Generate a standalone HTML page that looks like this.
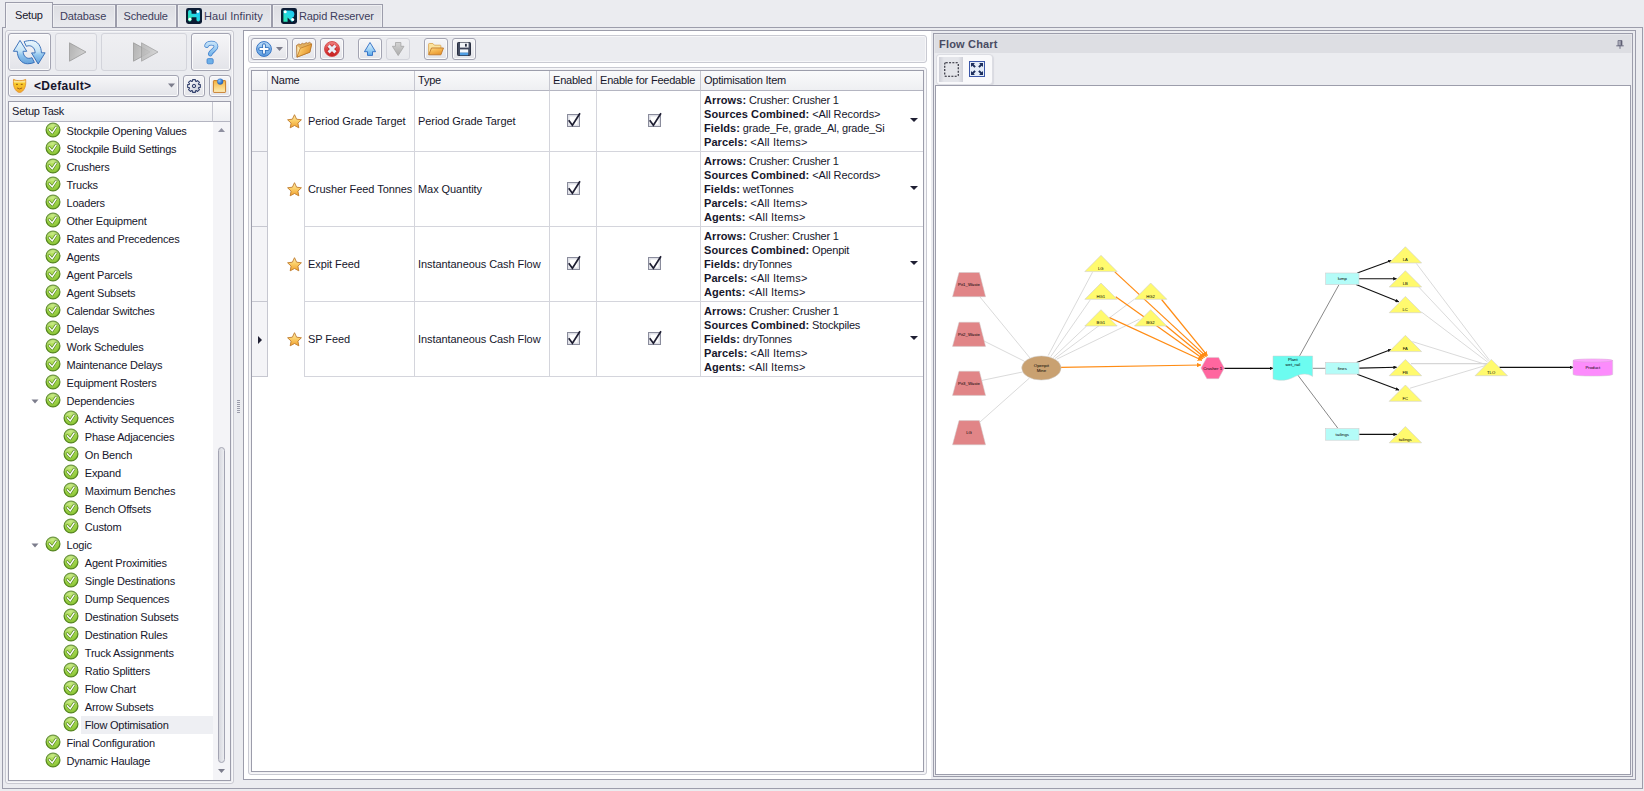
<!DOCTYPE html>
<html lang="en">
<head>
<meta charset="utf-8">
<title>Flow Optimisation</title>
<style>
*{box-sizing:border-box;margin:0;padding:0}
html,body{width:1644px;height:791px;overflow:hidden}
body{background:#ebecf0;font-family:"Liberation Sans",sans-serif;font-size:11px;letter-spacing:-0.21px;color:#16162b;position:relative}
.a{position:absolute}
.t{position:absolute;white-space:nowrap;line-height:14px;height:14px}
/* tabs */
.tab{position:absolute;top:4px;height:23px;border:1px solid #9c9dab;border-bottom:none;background:linear-gradient(#dcdde2,#e9eaee);box-shadow:inset 1px 1px 0 #eeeff2,inset -1px 0 0 #eeeff2;color:#3c3d5c}
.tab.act{top:2px;height:26px;background:#ebecf0;color:#16162b;z-index:3;box-shadow:inset 1px 1px 0 #f4f4f6}
.tab span{position:absolute;top:4px;white-space:nowrap;line-height:14px}
.tab.act span{top:5px}
.page{position:absolute;left:2px;top:27px;width:1641px;height:762px;border:1px solid #9c9dab;border-top-color:#9c9dab}
/* generic panels */
.grp{position:absolute;border:1px solid #c9cad2;border-radius:3px;box-shadow:inset 0 0 0 1px #f7f7f9}
.btn{position:absolute;border:1px solid #a3a4b2;border-radius:3px;background:linear-gradient(#f6f6f8,#e3e4e9);box-shadow:inset 0 0 0 1px #fbfbfc}
.btn.dis{border-color:#d3d4db;background:linear-gradient(#efeff2,#e8e9ed);box-shadow:none}
.sunk{position:absolute;border:1px solid #9c9dab;background:#fff}
/* tree */
.row{position:absolute;left:0;height:18px;width:204px}
.row .tx{position:absolute;top:2px;line-height:14px;white-space:nowrap}
.ck{position:absolute;top:0;width:16px;height:16px}
/* grid */
.hd{position:absolute;top:0;height:20px;border-right:1px solid #c6c7d0;border-bottom:1px solid #b4b5c1;background:linear-gradient(#fafafb,#eeeff2)}
.hd span{position:absolute;left:3px;top:2px;line-height:14px;white-space:nowrap}
.vl{position:absolute;width:1px;background:#d4d5dc}
.hl{position:absolute;height:1px;background:#d4d5dc}
.ol{position:absolute;left:452px;white-space:nowrap;line-height:14px;height:14px}
.ol b{font-weight:bold;letter-spacing:0.08px}
.t b{font-weight:bold;letter-spacing:0.08px}
.w{letter-spacing:0.2px}
.w2{letter-spacing:-0.06px}
.c{letter-spacing:-0.07px}
.cb{position:absolute;width:13px;height:13px}
svg{position:absolute;overflow:visible}
svg text{font-family:"Liberation Sans",sans-serif}
</style>
</head>
<body>
<svg width="0" height="0" style="left:0;top:0">
<defs>
<radialGradient id="gok" cx="0.45" cy="0.25" r="0.85"><stop offset="0" stop-color="#bce668"/><stop offset="0.7" stop-color="#94cc3e"/><stop offset="1" stop-color="#7ab42e"/></radialGradient>
<linearGradient id="gstar" x1="0" y1="0" x2="0" y2="1"><stop offset="0" stop-color="#fff0b8"/><stop offset="0.45" stop-color="#fbcf68"/><stop offset="1" stop-color="#f0a030"/></linearGradient>
<linearGradient id="gblue" x1="0" y1="0" x2="0" y2="1"><stop offset="0" stop-color="#d2e8fa"/><stop offset="1" stop-color="#5a9fe0"/></linearGradient>
<linearGradient id="gfold" x1="0" y1="0" x2="0.600" y2="1"><stop offset="0" stop-color="#fde4a4"/><stop offset="0.400" stop-color="#f7bd5a"/><stop offset="1" stop-color="#e8962e"/></linearGradient>
<linearGradient id="gred" x1="0" y1="0" x2="0" y2="1"><stop offset="0" stop-color="#f08484"/><stop offset="0.500" stop-color="#dc4444"/><stop offset="1" stop-color="#c41c1c"/></linearGradient>
<linearGradient id="gadd" x1="0" y1="0" x2="0" y2="1"><stop offset="0" stop-color="#c2e0fa"/><stop offset="0.500" stop-color="#86baec"/><stop offset="1" stop-color="#5a9ae0"/></linearGradient>
<linearGradient id="ggrey" x1="0" y1="0" x2="1" y2="0.3"><stop offset="0" stop-color="#b2b2b2"/><stop offset="1" stop-color="#d0d0d0"/></linearGradient>
<linearGradient id="gteal" x1="0" y1="1" x2="1" y2="0" gradientUnits="objectBoundingBox"><stop offset="0" stop-color="#2ee8a6"/><stop offset="0.55" stop-color="#24d6e6"/><stop offset="1" stop-color="#1cc4f4"/></linearGradient>
<linearGradient id="grf" x1="0" y1="0" x2="0" y2="25" gradientUnits="userSpaceOnUse"><stop offset="0" stop-color="#eef9fe"/><stop offset="0.45" stop-color="#c4e3f6"/><stop offset="0.6" stop-color="#92c6ee"/><stop offset="1" stop-color="#5c9bd8"/></linearGradient>
<linearGradient id="ghq" x1="0" y1="0" x2="0" y2="14" gradientUnits="userSpaceOnUse"><stop offset="0" stop-color="#cfe8fa"/><stop offset="1" stop-color="#74b4ea"/></linearGradient>
<linearGradient id="gmask" x1="0" y1="0" x2="0" y2="1"><stop offset="0" stop-color="#f6b826"/><stop offset="0.18" stop-color="#fde89a"/><stop offset="0.3" stop-color="#f8cc28"/><stop offset="1" stop-color="#f4a82c"/></linearGradient>
<linearGradient id="ggear" x1="0" y1="0" x2="1" y2="1"><stop offset="0" stop-color="#ffffff"/><stop offset="1" stop-color="#c4c9d6"/></linearGradient>
<linearGradient id="gnote" x1="0" y1="0" x2="0" y2="1"><stop offset="0" stop-color="#f6b23c"/><stop offset="0.85" stop-color="#fce6a4"/><stop offset="1" stop-color="#fef6d6"/></linearGradient>
<radialGradient id="gpin" cx="0.35" cy="0.35" r="0.8"><stop offset="0" stop-color="#9fd0f8"/><stop offset="0.5" stop-color="#3f86d8"/><stop offset="1" stop-color="#1c4fa0"/></radialGradient>
<linearGradient id="gfold3" x1="0" y1="0.300" x2="1" y2="0.700"><stop offset="0" stop-color="#fde2a0"/><stop offset="0.350" stop-color="#f6bd5a"/><stop offset="1" stop-color="#e0902a"/></linearGradient>
<linearGradient id="gup" x1="0" y1="0" x2="0" y2="1"><stop offset="0" stop-color="#e4f3fd"/><stop offset="0.500" stop-color="#a8d6f6"/><stop offset="1" stop-color="#5aaaea"/></linearGradient>
<linearGradient id="gdn" x1="0" y1="0" x2="0" y2="1"><stop offset="0" stop-color="#d4d4d4"/><stop offset="1" stop-color="#ababab"/></linearGradient>
<g id="ok"><circle cx="8" cy="8" r="6.900" fill="url(#gok)" stroke="#558520" stroke-width="1.200"/><path d="M1.700 6.500A6.300 6.300 0 0 1 14.300 6.500A9 5 0 0 0 1.700 6.500z" fill="#fff" opacity="0.180"/><path d="M4.300 7.700l2.900 3.200l3.900-5.800" fill="none" stroke="#4a7a1a" stroke-width="2.700" stroke-linecap="round" stroke-linejoin="round" opacity="0.850"/><path d="M4.300 7.700l2.900 3.200l3.900-5.800" fill="none" stroke="#fff" stroke-width="1.400" stroke-linecap="round" stroke-linejoin="round"/></g>
<g id="star"><path d="M7.500 0.700l2.100 4.500l4.800 0.600l-3.500 3.300l0.900 4.700L7.500 11.500l-4.300 2.300l0.900-4.700L0.600 5.800l4.800-0.600z" fill="url(#gstar)" stroke="#c07a2a" stroke-width="0.900" stroke-linejoin="round"/></g>
<g id="chk"><rect x="0.500" y="0.500" width="12" height="12" fill="#dfe0e7" stroke="#8a8c9c"/><rect x="2.500" y="2.500" width="8" height="8" fill="#fff"/><path d="M1.700 6.200L5.400 11.300L13 -0.800" fill="none" stroke="#1e1e32" stroke-width="1.700"/></g>
</defs>
</svg>

<div class="page"></div>
<div class="tab act" style="left:5px;width:48px"><span style="left:9px">Setup</span></div>
<div class="tab" style="left:52px;width:64px"><span style="left:7px;letter-spacing:-0.1px">Database</span></div>
<div class="tab" style="left:116px;width:61px"><span style="left:6.500px">Schedule</span></div>
<div class="tab" style="left:177px;width:95px"><svg style="left:8px;top:3px" width="16" height="16" viewBox="0 0 16 16"><rect width="16" height="16" rx="2.400" fill="#0b1b33"/><path d="M3.800 3.800v8M12.200 3.800v8M3.800 7.500h8.400" stroke="url(#gteal)" stroke-width="3.500" stroke-linecap="round" fill="none"/><circle cx="11.900" cy="3.600" r="1.450" fill="#fff"/><circle cx="3.900" cy="11.200" r="1.450" fill="#fff"/></svg><span style="left:26px;letter-spacing:0.1px">Haul Infinity</span></div>
<div class="tab" style="left:272px;width:111px"><svg style="left:8px;top:3px" width="16" height="16" viewBox="0 0 16 16"><rect width="16" height="16" rx="2.400" fill="#0b1b33"/><path d="M2.400 2.400h7a4 4 0 0 1 4 4a3.600 3.600 0 0 1 -2.300 3.300l2.200 2.300l-2.300 2l-4.400-4.600v4.400h-4.200z" fill="url(#gteal)"/><circle cx="4.200" cy="3.800" r="1.500" fill="#fff"/><circle cx="11.700" cy="11.500" r="1.500" fill="#fff"/></svg><span style="left:26px;letter-spacing:-0.12px">Rapid Reserver</span></div>

<!-- left panel -->
<div class="grp" style="left:5px;top:30px;width:229px;height:754px"></div>
<div class="btn" style="left:8px;top:33px;width:43px;height:38px">
<svg style="left:4px;top:6px" width="33" height="25" viewBox="0 0 33 25">
<path d="M7 0.400L0.400 11.300H4.300C4.300 17.500 8 23.800 14.600 23.800C17.200 23.800 19.600 23.300 21.400 22.400L19 17.700C17.600 18.300 16.500 18.400 15.400 18.300C12.400 18 10.100 15 10.100 11.300H13.800z" fill="url(#grf)" stroke="#2f68b4" stroke-width="0.900" stroke-linejoin="round"/>
<path d="M25.200 24L32.100 12.800H28.400C28.400 7 25 0.500 18.400 0.500C15.600 0.500 13 1 11.100 1.700L13.300 6.300C14.500 5.800 15.700 5.700 16.800 5.800C19.800 6.100 22.100 9 22.100 12.900H18.500z" fill="url(#grf)" stroke="#2f68b4" stroke-width="0.900" stroke-linejoin="round"/>
</svg></div>
<div class="btn dis" style="left:55px;top:33px;width:42px;height:38px">
<svg style="left:13px;top:8px" width="18" height="20" viewBox="0 0 18 20"><path d="M0.5 0.8v18.4L17 10z" fill="url(#ggrey)" stroke="#9a9a9a" stroke-width="0.8"/></svg></div>
<div class="btn dis" style="left:101px;top:33px;width:86px;height:38px">
<svg style="left:31px;top:8px" width="26" height="20" viewBox="0 0 26 20"><path d="M0.5 0.8v18.4L17 10z" fill="url(#ggrey)" stroke="#9a9a9a" stroke-width="0.8"/><path d="M8.500 0.800v18.400L25 10z" fill="url(#ggrey)" stroke="#9a9a9a" stroke-width="0.8" opacity="0.85"/></svg></div>
<div class="btn" style="left:191px;top:33px;width:40px;height:38px">
<svg style="left:12px;top:7px" width="15" height="24" viewBox="0 0 15 24"><path d="M2.600 4.600C3.600 2.300 5.800 2.200 7.400 2.200C10.400 2.200 12 3.700 12 5.600C12 8.800 7.300 9.400 6.200 13" fill="none" stroke="#3f7fcc" stroke-width="4.700" stroke-linecap="round"/><path d="M2.600 4.600C3.600 2.300 5.800 2.200 7.400 2.200C10.400 2.200 12 3.700 12 5.600C12 8.800 7.300 9.400 6.200 13" fill="none" stroke="url(#ghq)" stroke-width="3.300" stroke-linecap="round"/><rect x="3" y="17.600" width="6.200" height="5.200" rx="1.300" fill="#6db0e8" stroke="#3f7fcc" stroke-width="0.800"/></svg></div>
<!-- combo -->
<div class="btn" style="left:8px;top:75px;width:171px;height:22px">
<svg style="left:4px;top:3px" width="13.200" height="14" viewBox="0 0 14 15"><path d="M0.500 0.400C3 1.700 5 1.700 7 1.700S11 1.700 13.500 0.400C13.700 4 13.700 6.500 12.600 9.300C11.500 12 9.400 14.400 7 14.400C4.600 14.400 2.500 12 1.400 9.300C0.300 6.500 0.300 4 0.500 0.400z" fill="url(#gmask)" stroke="#e0902c" stroke-width="0.900" stroke-linejoin="round"/><path d="M3.200 5.700h2M8.300 5.700h2" stroke="#8a4a10" stroke-width="1" fill="none"/><path d="M4.300 9.600q2.700 2.200 5.400 0" stroke="#9a5a14" stroke-width="1" fill="none"/></svg>
<span class="t" style="left:25px;top:3px;font-size:12px;font-weight:bold;letter-spacing:0.28px;color:#15152c">&lt;Default&gt;</span>
<svg style="left:159px;top:7px" width="7" height="5" viewBox="0 0 7 5"><path d="M0 0.500h7L3.500 4.500z" fill="#7c7d8c"/></svg>
</div>
<div class="btn" style="left:183px;top:75px;width:22px;height:22px">
<svg style="left:3px;top:3px" width="14" height="14" viewBox="0 0 14 14"><path d="M5.63 0.65L8.37 0.65L8.55 2.24L9.27 2.54L10.53 1.54L12.46 3.47L11.46 4.73L11.76 5.45L13.35 5.63L13.35 8.37L11.76 8.55L11.46 9.27L12.46 10.53L10.53 12.46L9.27 11.46L8.55 11.76L8.37 13.35L5.63 13.35L5.45 11.76L4.73 11.46L3.47 12.46L1.54 10.53L2.54 9.27L2.24 8.55L0.65 8.37L0.65 5.63L2.24 5.45L2.54 4.73L1.54 3.47L3.47 1.54L4.73 2.54L5.45 2.24z" fill="url(#ggear)" stroke="#34426e" stroke-width="1.100" stroke-linejoin="round"/><circle cx="7" cy="7" r="1.700" fill="#c4c7d2" stroke="#34426e" stroke-width="1"/></svg></div>
<div class="btn" style="left:209px;top:75px;width:22px;height:22px">
<svg style="left:2px;top:1px" width="15" height="16" viewBox="0 0 15 16"><rect x="1.400" y="3.600" width="12.200" height="11.800" rx="0.600" fill="url(#gnote)" stroke="#c87e2c" stroke-width="1"/><circle cx="8.200" cy="4.600" r="2.900" fill="url(#gpin)" stroke="#2a62b0" stroke-width="0.400"/></svg></div>
<!-- tree list -->
<div class="sunk" style="left:8px;top:101px;width:223px;height:680px"></div>
<div class="hd" style="left:9px;top:102px;width:204px"><span style="left:3px;top:2px">Setup Task</span></div>
<div class="hd" style="left:213px;top:102px;width:17px;border-right:none"></div>

<div class="a" style="left:9px;top:122px;width:204px;height:658px;background:#fff;overflow:hidden">
<div class="row" style="top:0px">
<svg class="ck" style="left:36px" viewBox="0 0 16 16"><use href="#ok"/></svg>
<span class="tx" style="left:57.5px">Stockpile Opening Values</span></div>
<div class="row" style="top:18px">
<svg class="ck" style="left:36px" viewBox="0 0 16 16"><use href="#ok"/></svg>
<span class="tx" style="left:57.5px">Stockpile Build Settings</span></div>
<div class="row" style="top:36px">
<svg class="ck" style="left:36px" viewBox="0 0 16 16"><use href="#ok"/></svg>
<span class="tx" style="left:57.5px">Crushers</span></div>
<div class="row" style="top:54px">
<svg class="ck" style="left:36px" viewBox="0 0 16 16"><use href="#ok"/></svg>
<span class="tx" style="left:57.5px">Trucks</span></div>
<div class="row" style="top:72px">
<svg class="ck" style="left:36px" viewBox="0 0 16 16"><use href="#ok"/></svg>
<span class="tx" style="left:57.5px">Loaders</span></div>
<div class="row" style="top:90px">
<svg class="ck" style="left:36px" viewBox="0 0 16 16"><use href="#ok"/></svg>
<span class="tx" style="left:57.5px">Other Equipment</span></div>
<div class="row" style="top:108px">
<svg class="ck" style="left:36px" viewBox="0 0 16 16"><use href="#ok"/></svg>
<span class="tx" style="left:57.5px">Rates and Precedences</span></div>
<div class="row" style="top:126px">
<svg class="ck" style="left:36px" viewBox="0 0 16 16"><use href="#ok"/></svg>
<span class="tx" style="left:57.5px">Agents</span></div>
<div class="row" style="top:144px">
<svg class="ck" style="left:36px" viewBox="0 0 16 16"><use href="#ok"/></svg>
<span class="tx" style="left:57.5px">Agent Parcels</span></div>
<div class="row" style="top:162px">
<svg class="ck" style="left:36px" viewBox="0 0 16 16"><use href="#ok"/></svg>
<span class="tx" style="left:57.5px">Agent Subsets</span></div>
<div class="row" style="top:180px">
<svg class="ck" style="left:36px" viewBox="0 0 16 16"><use href="#ok"/></svg>
<span class="tx" style="left:57.5px">Calendar Switches</span></div>
<div class="row" style="top:198px">
<svg class="ck" style="left:36px" viewBox="0 0 16 16"><use href="#ok"/></svg>
<span class="tx" style="left:57.5px">Delays</span></div>
<div class="row" style="top:216px">
<svg class="ck" style="left:36px" viewBox="0 0 16 16"><use href="#ok"/></svg>
<span class="tx" style="left:57.5px">Work Schedules</span></div>
<div class="row" style="top:234px">
<svg class="ck" style="left:36px" viewBox="0 0 16 16"><use href="#ok"/></svg>
<span class="tx" style="left:57.5px">Maintenance Delays</span></div>
<div class="row" style="top:252px">
<svg class="ck" style="left:36px" viewBox="0 0 16 16"><use href="#ok"/></svg>
<span class="tx" style="left:57.5px">Equipment Rosters</span></div>
<div class="row" style="top:270px">
<svg style="left:22px;top:7px" width="8" height="5" viewBox="0 0 8 5"><path d="M0.5 0.5h7L4 4.5z" fill="#7c7d8c"/></svg>
<svg class="ck" style="left:36px" viewBox="0 0 16 16"><use href="#ok"/></svg>
<span class="tx" style="left:57.5px">Dependencies</span></div>
<div class="row" style="top:288px">
<svg class="ck" style="left:54px" viewBox="0 0 16 16"><use href="#ok"/></svg>
<span class="tx" style="left:75.8px">Activity Sequences</span></div>
<div class="row" style="top:306px">
<svg class="ck" style="left:54px" viewBox="0 0 16 16"><use href="#ok"/></svg>
<span class="tx" style="left:75.8px">Phase Adjacencies</span></div>
<div class="row" style="top:324px">
<svg class="ck" style="left:54px" viewBox="0 0 16 16"><use href="#ok"/></svg>
<span class="tx" style="left:75.8px">On Bench</span></div>
<div class="row" style="top:342px">
<svg class="ck" style="left:54px" viewBox="0 0 16 16"><use href="#ok"/></svg>
<span class="tx" style="left:75.8px">Expand</span></div>
<div class="row" style="top:360px">
<svg class="ck" style="left:54px" viewBox="0 0 16 16"><use href="#ok"/></svg>
<span class="tx" style="left:75.8px">Maximum Benches</span></div>
<div class="row" style="top:378px">
<svg class="ck" style="left:54px" viewBox="0 0 16 16"><use href="#ok"/></svg>
<span class="tx" style="left:75.8px">Bench Offsets</span></div>
<div class="row" style="top:396px">
<svg class="ck" style="left:54px" viewBox="0 0 16 16"><use href="#ok"/></svg>
<span class="tx" style="left:75.8px">Custom</span></div>
<div class="row" style="top:414px">
<svg style="left:22px;top:7px" width="8" height="5" viewBox="0 0 8 5"><path d="M0.5 0.5h7L4 4.5z" fill="#7c7d8c"/></svg>
<svg class="ck" style="left:36px" viewBox="0 0 16 16"><use href="#ok"/></svg>
<span class="tx" style="left:57.5px">Logic</span></div>
<div class="row" style="top:432px">
<svg class="ck" style="left:54px" viewBox="0 0 16 16"><use href="#ok"/></svg>
<span class="tx" style="left:75.8px">Agent Proximities</span></div>
<div class="row" style="top:450px">
<svg class="ck" style="left:54px" viewBox="0 0 16 16"><use href="#ok"/></svg>
<span class="tx" style="left:75.8px">Single Destinations</span></div>
<div class="row" style="top:468px">
<svg class="ck" style="left:54px" viewBox="0 0 16 16"><use href="#ok"/></svg>
<span class="tx" style="left:75.8px">Dump Sequences</span></div>
<div class="row" style="top:486px">
<svg class="ck" style="left:54px" viewBox="0 0 16 16"><use href="#ok"/></svg>
<span class="tx" style="left:75.8px">Destination Subsets</span></div>
<div class="row" style="top:504px">
<svg class="ck" style="left:54px" viewBox="0 0 16 16"><use href="#ok"/></svg>
<span class="tx" style="left:75.8px">Destination Rules</span></div>
<div class="row" style="top:522px">
<svg class="ck" style="left:54px" viewBox="0 0 16 16"><use href="#ok"/></svg>
<span class="tx" style="left:75.8px">Truck Assignments</span></div>
<div class="row" style="top:540px">
<svg class="ck" style="left:54px" viewBox="0 0 16 16"><use href="#ok"/></svg>
<span class="tx" style="left:75.8px">Ratio Splitters</span></div>
<div class="row" style="top:558px">
<svg class="ck" style="left:54px" viewBox="0 0 16 16"><use href="#ok"/></svg>
<span class="tx" style="left:75.8px">Flow Chart</span></div>
<div class="row" style="top:576px">
<svg class="ck" style="left:54px" viewBox="0 0 16 16"><use href="#ok"/></svg>
<span class="tx" style="left:75.8px">Arrow Subsets</span></div>
<div class="row" style="top:594px">
<div class="a" style="left:72px;top:0;width:132px;height:18px;background:#eeeff3"></div>
<svg class="ck" style="left:54px" viewBox="0 0 16 16"><use href="#ok"/></svg>
<span class="tx" style="left:75.8px">Flow Optimisation</span></div>
<div class="row" style="top:612px">
<svg class="ck" style="left:36px" viewBox="0 0 16 16"><use href="#ok"/></svg>
<span class="tx" style="left:57.5px">Final Configuration</span></div>
<div class="row" style="top:630px">
<svg class="ck" style="left:36px" viewBox="0 0 16 16"><use href="#ok"/></svg>
<span class="tx" style="left:57.5px">Dynamic Haulage</span></div>
</div>
<!-- scrollbar -->
<div class="a" style="left:213px;top:122px;width:17px;height:658px;background:#f4f4f7"></div>
<svg style="left:218px;top:128px" width="7" height="4" viewBox="0 0 7 4"><path d="M0 4h7L3.500 0z" fill="#8f90a0"/></svg>
<svg style="left:218px;top:769px" width="7" height="4" viewBox="0 0 7 4"><path d="M0 0h7L3.500 4z" fill="#7c7d8c"/></svg>
<div class="a" style="left:218px;top:447px;width:7px;height:316px;border:1px solid #a3a4b2;border-radius:3.500px;background:linear-gradient(90deg,#d6d7de,#ecedf1)"></div>
<!-- splitter dots -->
<div class="a" style="left:237px;top:400px;width:3px;height:13px;background:repeating-linear-gradient(#9c9dab 0 1px,transparent 1px 2px)"></div>

<!-- centre panel -->
<div class="a" style="left:243px;top:30px;width:1393px;height:750px;border:1px solid #9c9dab;background:#ebecf0"></div>
<div class="a" style="left:244px;top:31px;width:687px;height:748px;background:#fff"></div>
<div class="grp" style="left:248px;top:35px;width:679px;height:28px;background:#ebecf0"></div>
<div class="btn" style="left:251px;top:38px;width:37px;height:22px"><svg style="left:4px;top:2px" width="16" height="16" viewBox="0 0 16 16"><circle cx="8" cy="8" r="7.400" fill="url(#gadd)" stroke="#3674c4" stroke-width="1"/><path d="M8 4v8M4 8h8" stroke="#2f6ebc" stroke-width="3.600" stroke-linecap="round"/><path d="M8 4.200v7.600M4.200 8h7.600" stroke="#fff" stroke-width="1.800" stroke-linecap="round"/></svg><svg style="left:24px;top:8px" width="7" height="4" viewBox="0 0 7 4"><path d="M0 0h7L3.500 4z" fill="#7c7d8c"/></svg></div>
<div class="btn" style="left:292px;top:38px;width:24px;height:22px"><svg style="left:3px;top:2.500px" width="16" height="15.500" viewBox="0 0 16 15.500"><path d="M0.500 3.400L2.900 1.900L4.400 2.600L6.400 1.300L8 2L10.200 0.600L11.800 1.300L13.500 0.300L15.700 1.900L13.900 10.200L0.900 15.200z" fill="#e2b060" stroke="#a8692a" stroke-width="0.700" stroke-linejoin="round"/><path d="M1.300 3.800L4.300 6.400L1.300 13.500z" fill="#fbe7b0"/><path d="M4.300 6.300L15.600 2.100L13.800 10.200L1 15.100z" fill="url(#gfold3)" stroke="#b87424" stroke-width="0.700" stroke-linejoin="round"/></svg></div>
<div class="btn" style="left:320px;top:38px;width:24px;height:22px"><svg style="left:3px;top:2px" width="16" height="16" viewBox="0 0 16 16"><circle cx="8" cy="8" r="7.500" fill="url(#gred)" stroke="#d24848" stroke-width="0.900"/><path d="M4.700 4.700l6.600 6.600M11.300 4.700l-6.600 6.600" stroke="#b82222" stroke-width="4.300" stroke-linecap="butt"/><path d="M4.600 4.600l6.800 6.800M11.400 4.600l-6.800 6.800" stroke="#e9eff8" stroke-width="2.900" stroke-linecap="butt"/></svg></div>
<div class="btn" style="left:358px;top:38px;width:24px;height:22px"><svg style="left:5px;top:3px" width="12" height="14" viewBox="0 0 12 14"><path d="M6 0.500L11.600 9.700H8.500V13.400H3.500V9.700H0.400z" fill="url(#gup)" stroke="#2c6cc4" stroke-width="0.900" stroke-linejoin="round"/></svg></div>
<div class="btn dis" style="left:386px;top:38px;width:24px;height:22px"><svg style="left:5px;top:3px" width="12.400" height="14" viewBox="0 0 12.400 14"><path d="M6.200 13.600L12 4.300H8.900V0.500H3.500V4.300H0.400z" fill="url(#gdn)" stroke="#a6a6a6" stroke-width="0.800" stroke-linejoin="round"/></svg></div>
<div class="btn" style="left:424px;top:38px;width:24px;height:22px"><svg style="left:3px;top:4px" width="16" height="12.400" viewBox="0 0 16 12.400"><path d="M0.600 11.600V1.200q0-0.700 0.700-0.700h3.600l1.500 1.700h5.800q0.700 0 0.700 0.700v2" fill="#fbe3a0" stroke="#d9a24a" stroke-width="0.800" stroke-linejoin="round"/><path d="M0.700 11.800L3.500 5h12L12.900 11.800z" fill="url(#gfold)" stroke="#c0782a" stroke-width="0.900" stroke-linejoin="round"/></svg></div>
<div class="btn" style="left:452px;top:38px;width:24px;height:22px"><svg style="left:4px;top:3px" width="14" height="14" viewBox="0 0 14 14"><rect x="0.500" y="0.500" width="13" height="13" rx="0.800" fill="#3c4358" stroke="#2a3042"/><path d="M2 1v12M12.200 1v12" stroke="#59617a" stroke-width="0.600"/><rect x="3" y="0.600" width="8.600" height="5" fill="#f2f4f8"/><rect x="8" y="1.800" width="1.800" height="2.800" fill="#2a3042"/><rect x="3" y="7.400" width="8.200" height="3.400" fill="#f4f8fc"/><rect x="3" y="10.600" width="8.200" height="2.700" fill="#4f9ee4"/></svg></div>
<div class="grp" style="left:248px;top:67px;width:679px;height:708px;background:#f1f1f4"></div>
<div class="sunk" style="left:251px;top:70px;width:673px;height:702px"></div>
<div class="hd" style="left:252px;top:71px;width:16px"><span></span></div>
<div class="hd" style="left:268px;top:71px;width:147px"><span>Name</span></div>
<div class="hd" style="left:415px;top:71px;width:135px"><span>Type</span></div>
<div class="hd" style="left:550px;top:71px;width:47px"><span>Enabled</span></div>
<div class="hd" style="left:597px;top:71px;width:104px"><span>Enable for Feedable</span></div>
<div class="hd" style="left:701px;top:71px;width:222px ;border-right:none"><span>Optimisation Item</span></div>
<div class="a" style="left:252px;top:91px;width:15px;height:286px;background:#f4f4f7"></div>
<div class="vl" style="left:267px;top:91px;height:286px;background:#c6c7d0"></div>
<div class="hl" style="left:252px;top:151px;width:16px;background:#c6c7d0"></div>
<div class="hl" style="left:304px;top:151px;width:619px"></div>
<svg style="left:287px;top:114.0px" width="15" height="14.500" viewBox="0 0 15 14.500"><use href="#star"/></svg>
<span class="t c" style="left:308px;top:114.0px">Period Grade Target</span>
<span class="t c" style="left:418px;top:114.0px">Period Grade Target</span>
<svg class="cb" style="left:567px;top:114.0px" viewBox="0 0 13 13"><use href="#chk"/></svg>
<svg class="cb" style="left:648px;top:114.0px" viewBox="0 0 13 13"><use href="#chk"/></svg>
<span class="t" style="left:704px;top:93px"><b>Arrows:</b> Crusher: Crusher 1</span>
<span class="t" style="left:704px;top:107px"><b>Sources Combined:</b> <span class="w2">&lt;All Records&gt;</span></span>
<span class="t" style="left:704px;top:121px"><b>Fields:</b> grade_Fe, grade_Al, grade_Si</span>
<span class="t" style="left:704px;top:135px"><b>Parcels:</b> <span class="w">&lt;All Items&gt;</span></span>
<svg style="left:910px;top:118.0px" width="8" height="4" viewBox="0 0 8 4"><path d="M0 0h8L4 4z" fill="#1f1f33"/></svg>
<div class="hl" style="left:252px;top:226px;width:16px;background:#c6c7d0"></div>
<div class="hl" style="left:304px;top:226px;width:619px"></div>
<svg style="left:287px;top:182.0px" width="15" height="14.500" viewBox="0 0 15 14.500"><use href="#star"/></svg>
<span class="t c" style="left:308px;top:182.0px">Crusher Feed Tonnes</span>
<span class="t c" style="left:418px;top:182.0px">Max Quantity</span>
<svg class="cb" style="left:567px;top:182.0px" viewBox="0 0 13 13"><use href="#chk"/></svg>
<span class="t" style="left:704px;top:154px"><b>Arrows:</b> Crusher: Crusher 1</span>
<span class="t" style="left:704px;top:168px"><b>Sources Combined:</b> <span class="w2">&lt;All Records&gt;</span></span>
<span class="t" style="left:704px;top:182px"><b>Fields:</b> wetTonnes</span>
<span class="t" style="left:704px;top:196px"><b>Parcels:</b> <span class="w">&lt;All Items&gt;</span></span>
<span class="t" style="left:704px;top:210px"><b>Agents:</b> <span class="w">&lt;All Items&gt;</span></span>
<svg style="left:910px;top:186.0px" width="8" height="4" viewBox="0 0 8 4"><path d="M0 0h8L4 4z" fill="#1f1f33"/></svg>
<div class="hl" style="left:252px;top:301px;width:16px;background:#c6c7d0"></div>
<div class="hl" style="left:304px;top:301px;width:619px"></div>
<svg style="left:287px;top:257.0px" width="15" height="14.500" viewBox="0 0 15 14.500"><use href="#star"/></svg>
<span class="t c" style="left:308px;top:257.0px">Expit Feed</span>
<span class="t c" style="left:418px;top:257.0px">Instantaneous Cash Flow</span>
<svg class="cb" style="left:567px;top:257.0px" viewBox="0 0 13 13"><use href="#chk"/></svg>
<svg class="cb" style="left:648px;top:257.0px" viewBox="0 0 13 13"><use href="#chk"/></svg>
<span class="t" style="left:704px;top:229px"><b>Arrows:</b> Crusher: Crusher 1</span>
<span class="t" style="left:704px;top:243px"><b>Sources Combined:</b> Openpit</span>
<span class="t" style="left:704px;top:257px"><b>Fields:</b> dryTonnes</span>
<span class="t" style="left:704px;top:271px"><b>Parcels:</b> <span class="w">&lt;All Items&gt;</span></span>
<span class="t" style="left:704px;top:285px"><b>Agents:</b> <span class="w">&lt;All Items&gt;</span></span>
<svg style="left:910px;top:261.0px" width="8" height="4" viewBox="0 0 8 4"><path d="M0 0h8L4 4z" fill="#1f1f33"/></svg>
<div class="hl" style="left:252px;top:376px;width:16px;background:#c6c7d0"></div>
<div class="hl" style="left:304px;top:376px;width:619px"></div>
<svg style="left:287px;top:332.0px" width="15" height="14.500" viewBox="0 0 15 14.500"><use href="#star"/></svg>
<span class="t c" style="left:308px;top:332.0px">SP Feed</span>
<span class="t c" style="left:418px;top:332.0px">Instantaneous Cash Flow</span>
<svg class="cb" style="left:567px;top:332.0px" viewBox="0 0 13 13"><use href="#chk"/></svg>
<svg class="cb" style="left:648px;top:332.0px" viewBox="0 0 13 13"><use href="#chk"/></svg>
<span class="t" style="left:704px;top:304px"><b>Arrows:</b> Crusher: Crusher 1</span>
<span class="t" style="left:704px;top:318px"><b>Sources Combined:</b> Stockpiles</span>
<span class="t" style="left:704px;top:332px"><b>Fields:</b> dryTonnes</span>
<span class="t" style="left:704px;top:346px"><b>Parcels:</b> <span class="w">&lt;All Items&gt;</span></span>
<span class="t" style="left:704px;top:360px"><b>Agents:</b> <span class="w">&lt;All Items&gt;</span></span>
<svg style="left:910px;top:336.0px" width="8" height="4" viewBox="0 0 8 4"><path d="M0 0h8L4 4z" fill="#1f1f33"/></svg>
<div class="vl" style="left:304px;top:91px;height:286px"></div>
<div class="vl" style="left:414px;top:91px;height:286px"></div>
<div class="vl" style="left:549px;top:91px;height:286px"></div>
<div class="vl" style="left:596px;top:91px;height:286px"></div>
<div class="vl" style="left:700px;top:91px;height:286px"></div>
<svg style="left:258px;top:335.500px" width="4" height="8" viewBox="0 0 4 8"><path d="M0 0v8L4 4z" fill="#1f1f33"/></svg>
<!-- outer container of centre+flow -->
<div class="a" style="left:933px;top:33px;width:700px;height:744px;border:1px solid #9c9dab;background:#ebecf0"></div>
<div class="a" style="left:934px;top:34px;width:698px;height:19px;background:#dddee3;border:1px solid #e6e7eb;border-bottom:none"></div>
<span class="t" style="left:939px;top:37px;font-weight:bold;color:#494b62;letter-spacing:0.18px">Flow Chart</span>
<svg style="left:1616px;top:40px" width="8" height="9" viewBox="0 0 8 9"><path d="M2 0.500h4v5h-4z" fill="#a9aab8" stroke="#6f7084" stroke-width="0.800"/><path d="M5.300 0.800v4.600" stroke="#55566a" stroke-width="1.100"/><path d="M0.300 5.800h7.400" stroke="#6f7084" stroke-width="1.100"/><path d="M4 6v2.800" stroke="#6f7084" stroke-width="1"/></svg>
<div class="a" style="left:937px;top:55px;width:55px;height:29px;border-radius:3px;background:#f9f9fb;box-shadow:0 0 0 1px #dcdde3,1px 1px 1px 1px #d9dae0"></div>
<div class="a" style="left:939px;top:57px;width:24px;height:25px;background:linear-gradient(90deg,#cfd0d8,#e4e5ea 20%,#e4e5ea 80%,#cfd0d8)"></div>
<svg style="left:944px;top:62px" width="15" height="15" viewBox="0 0 15 15"><rect x="0.750" y="0.750" width="13.500" height="13.500" rx="1" fill="none" stroke="#20202c" stroke-width="1.100" stroke-dasharray="2 1.300"/></svg>
<svg style="left:969px;top:61px" width="16" height="16" viewBox="0 0 16 16"><rect x="0.500" y="0.500" width="15" height="15" fill="#e4ecf8" stroke="#3a56a8"/><g fill="#1d2f5e"><path d="M2 2h4L4.700 3.300L6.800 5.400L5.400 6.800L3.300 4.700L2 6z"/><path d="M14 2v4L12.700 4.700L10.600 6.800L9.200 5.400L11.300 3.300L10 2z"/><path d="M2 14v-4L3.300 11.300L5.400 9.200L6.800 10.600L4.700 12.700L6 14z"/><path d="M14 14h-4L11.300 12.700L9.200 10.600L10.600 9.200L12.700 11.300L14 10z"/></g></svg>
<div class="a" style="left:935px;top:85px;width:696px;height:690px;border:1px solid #9c9dab;background:#fff"></div>
<svg style="left:0;top:0" width="1644" height="791" viewBox="0 0 1644 791">
<defs><marker id="mo" viewBox="0 0 6 6" refX="5.500" refY="3" markerWidth="4.800" markerHeight="4.800" markerUnits="userSpaceOnUse" orient="auto"><path d="M0 0L6 3L0 6z" fill="#ff8c14"/></marker><marker id="mk" viewBox="0 0 6 6" refX="5.500" refY="3" markerWidth="3.600" markerHeight="3.600" markerUnits="userSpaceOnUse" orient="auto"><path d="M0 0L6 3L0 6z" fill="#111"/></marker></defs>
<line x1="980" y1="297" x2="1030" y2="358" stroke="#d6d6d6" stroke-width="0.9"/>
<line x1="984" y1="341" x2="1024" y2="361" stroke="#d6d6d6" stroke-width="0.9"/>
<line x1="981.5" y1="380.5" x2="1022.5" y2="372" stroke="#d6d6d6" stroke-width="0.9"/>
<line x1="980" y1="422" x2="1029.5" y2="378" stroke="#d6d6d6" stroke-width="0.9"/>
<line x1="1048.2" y1="355.5" x2="1092.5" y2="272.2" stroke="#d6d6d6" stroke-width="0.9"/>
<line x1="1050.7" y1="356.7" x2="1090.3" y2="299.8" stroke="#d6d6d6" stroke-width="0.9"/>
<line x1="1053.3" y1="357.5" x2="1086.6" y2="326" stroke="#d6d6d6" stroke-width="0.9"/>
<line x1="1055" y1="358.5" x2="1134" y2="299.5" stroke="#d6d6d6" stroke-width="0.9"/>
<line x1="1056.7" y1="359.2" x2="1139.5" y2="319.1" stroke="#d6d6d6" stroke-width="0.9"/>
<line x1="1114.8" y1="271.9" x2="1206.4" y2="356.6" stroke="#ff8c14" stroke-width="1.25" marker-end="url(#mo)"/>
<line x1="1115.7" y1="296.7" x2="1203" y2="358.8" stroke="#ff8c14" stroke-width="1.25" marker-end="url(#mo)"/>
<line x1="1109.5" y1="317.6" x2="1202" y2="360.3" stroke="#ff8c14" stroke-width="1.25" marker-end="url(#mo)"/>
<line x1="1161.6" y1="299.5" x2="1207.4" y2="355.7" stroke="#ff8c14" stroke-width="1.25" marker-end="url(#mo)"/>
<line x1="1165.6" y1="325.6" x2="1204.5" y2="357.5" stroke="#ff8c14" stroke-width="1.25" marker-end="url(#mo)"/>
<line x1="1060.6" y1="367.3" x2="1201" y2="365" stroke="#ff8c14" stroke-width="1.25" marker-end="url(#mo)"/>
<line x1="1416.4" y1="263.5" x2="1489.2" y2="359.8" stroke="#d6d6d6" stroke-width="0.9"/>
<line x1="1418.7" y1="287" x2="1488.5" y2="361" stroke="#d6d6d6" stroke-width="0.9"/>
<line x1="1421.5" y1="312" x2="1487.5" y2="362" stroke="#d6d6d6" stroke-width="0.9"/>
<line x1="1412.4" y1="341.6" x2="1486" y2="364.5" stroke="#d6d6d6" stroke-width="0.9"/>
<line x1="1410.9" y1="363.7" x2="1487" y2="363.7" stroke="#d6d6d6" stroke-width="1.3"/>
<line x1="1410" y1="388.2" x2="1485.5" y2="365.5" stroke="#d6d6d6" stroke-width="0.9"/>
<line x1="1299.5" y1="356" x2="1338.8" y2="285" stroke="#6a6a6a" stroke-width="0.8"/>
<line x1="1312.6" y1="368.3" x2="1325.6" y2="368.3" stroke="#6a6a6a" stroke-width="0.8"/>
<line x1="1297.6" y1="374.8" x2="1337.7" y2="428" stroke="#6a6a6a" stroke-width="0.8"/>
<line x1="1224.3" y1="368.3" x2="1273" y2="368.3" stroke="#111" stroke-width="1.15" marker-end="url(#mk)"/>
<line x1="1357.3" y1="273" x2="1391.4" y2="260.5" stroke="#111" stroke-width="1.1" marker-end="url(#mk)"/>
<line x1="1359" y1="278.7" x2="1396.5" y2="278.7" stroke="#111" stroke-width="1.1" marker-end="url(#mk)"/>
<line x1="1356.1" y1="284.6" x2="1398.8" y2="301.8" stroke="#111" stroke-width="1.1" marker-end="url(#mk)"/>
<line x1="1356.7" y1="362.6" x2="1391.1" y2="349.5" stroke="#111" stroke-width="1.1" marker-end="url(#mk)"/>
<line x1="1359.2" y1="368.1" x2="1396.7" y2="367.3" stroke="#111" stroke-width="1.1" marker-end="url(#mk)"/>
<line x1="1357.2" y1="374.3" x2="1399" y2="390.1" stroke="#111" stroke-width="1.1" marker-end="url(#mk)"/>
<line x1="1359.2" y1="434.4" x2="1396.7" y2="434.4" stroke="#111" stroke-width="1.2" marker-end="url(#mk)"/>
<line x1="1499.3" y1="367.4" x2="1573" y2="367.4" stroke="#111" stroke-width="1.1" marker-end="url(#mk)"/>
<path d="M959 272.5H979.400L985.600 296.7H952.500z" fill="#e18587" stroke="#cfcfcf" stroke-width="0.500"/>
<text x="969" y="285.8" font-size="4.3" text-anchor="middle" fill="#000" letter-spacing="0">Pit1_Waste</text>
<path d="M959 322.2H979.400L985.600 346.4H952.500z" fill="#e18587" stroke="#cfcfcf" stroke-width="0.500"/>
<text x="969" y="335.5" font-size="4.3" text-anchor="middle" fill="#000" letter-spacing="0">Pit2_Waste</text>
<path d="M959 371.2H979.400L985.600 395.4H952.500z" fill="#e18587" stroke="#cfcfcf" stroke-width="0.500"/>
<text x="969" y="384.5" font-size="4.3" text-anchor="middle" fill="#000" letter-spacing="0">Pit3_Waste</text>
<path d="M959 420.6H979.400L985.600 444.8H952.500z" fill="#e18587" stroke="#cfcfcf" stroke-width="0.500"/>
<text x="969" y="433.90000000000003" font-size="4.3" text-anchor="middle" fill="#000" letter-spacing="0">LG</text>
<ellipse cx="1041.400" cy="368" rx="19.700" ry="12.100" fill="#c9a171" stroke="#cfcfcf" stroke-width="0.500"/>
<text x="1041.4" y="366.5" font-size="4.3" text-anchor="middle" fill="#000" letter-spacing="0">Openpit</text>
<text x="1041.4" y="372.4" font-size="4.3" text-anchor="middle" fill="#000" letter-spacing="0">Mine</text>
<path d="M1101 255.3L1117.2 271.6H1084.8z" fill="#fffa6e" stroke="#cfcfcf" stroke-width="0.600"/>
<text x="1100.8" y="269.90000000000003" font-size="4.2" text-anchor="middle" fill="#000" letter-spacing="0">LG</text>
<path d="M1101 283L1117.2 299.3H1084.8z" fill="#fffa6e" stroke="#cfcfcf" stroke-width="0.600"/>
<text x="1100.8" y="297.6" font-size="4.2" text-anchor="middle" fill="#000" letter-spacing="0">HG1</text>
<path d="M1101 309.7L1117.2 326.0H1084.8z" fill="#fffa6e" stroke="#cfcfcf" stroke-width="0.600"/>
<text x="1100.8" y="324.3" font-size="4.2" text-anchor="middle" fill="#000" letter-spacing="0">BG1</text>
<path d="M1150.7 283L1166.9 299.3H1134.5z" fill="#fffa6e" stroke="#cfcfcf" stroke-width="0.600"/>
<text x="1150.5" y="297.6" font-size="4.2" text-anchor="middle" fill="#000" letter-spacing="0">HG2</text>
<path d="M1150.7 309.7L1166.9 326.0H1134.5z" fill="#fffa6e" stroke="#cfcfcf" stroke-width="0.600"/>
<text x="1150.5" y="324.3" font-size="4.2" text-anchor="middle" fill="#000" letter-spacing="0">BG2</text>
<path d="M1201 368L1206.900 357.400H1218.600L1224.300 368L1218.600 378.700H1206.900z" fill="#ff669f" stroke="#cfcfcf" stroke-width="0.500"/>
<text x="1212.6" y="369.5" font-size="4.3" text-anchor="middle" fill="#000" letter-spacing="0">Crusher 1</text>
<path d="M1273 356H1312.600V376.400C1306 372.500 1300 374 1293 377.500C1286 381 1279 381 1273 379z" fill="#6cfcf0" stroke="#cfcfcf" stroke-width="0.500"/>
<text x="1292.8" y="360.6" font-size="4.3" text-anchor="middle" fill="#000" letter-spacing="0">Plant</text>
<text x="1292.8" y="366.4" font-size="4.3" text-anchor="middle" fill="#000" letter-spacing="0">wet_rail</text>
<rect x="1325.700" y="273" width="33.300" height="11.600" fill="#b4fcf8" stroke="#cfcfcf" stroke-width="0.600"/>
<text x="1342.3" y="280.2" font-size="4.3" text-anchor="middle" fill="#000" letter-spacing="0">lump</text>
<rect x="1325.700" y="362.5" width="33.300" height="11.600" fill="#b4fcf8" stroke="#cfcfcf" stroke-width="0.600"/>
<text x="1342.3" y="369.7" font-size="4.3" text-anchor="middle" fill="#000" letter-spacing="0">fines</text>
<rect x="1325.700" y="428.6" width="33.300" height="11.600" fill="#b4fcf8" stroke="#cfcfcf" stroke-width="0.600"/>
<text x="1342.3" y="435.8" font-size="4.3" text-anchor="middle" fill="#000" letter-spacing="0">tailings</text>
<path d="M1405.4 246.7L1421.6000000000001 263.0H1389.2z" fill="#fffa6e" stroke="#cfcfcf" stroke-width="0.600"/>
<text x="1405.2" y="261.3" font-size="4.2" text-anchor="middle" fill="#000" letter-spacing="0">LA</text>
<path d="M1405.4 270.7L1421.6000000000001 287.0H1389.2z" fill="#fffa6e" stroke="#cfcfcf" stroke-width="0.600"/>
<text x="1405.2" y="285.3" font-size="4.2" text-anchor="middle" fill="#000" letter-spacing="0">LB</text>
<path d="M1405.4 296.4L1421.6000000000001 312.7H1389.2z" fill="#fffa6e" stroke="#cfcfcf" stroke-width="0.600"/>
<text x="1405.2" y="311.0" font-size="4.2" text-anchor="middle" fill="#000" letter-spacing="0">LC</text>
<path d="M1405.4 335.3L1421.6000000000001 351.6H1389.2z" fill="#fffa6e" stroke="#cfcfcf" stroke-width="0.600"/>
<text x="1405.2" y="349.90000000000003" font-size="4.2" text-anchor="middle" fill="#000" letter-spacing="0">FA</text>
<path d="M1405.4 359.4L1421.6000000000001 375.7H1389.2z" fill="#fffa6e" stroke="#cfcfcf" stroke-width="0.600"/>
<text x="1405.2" y="374.0" font-size="4.2" text-anchor="middle" fill="#000" letter-spacing="0">FB</text>
<path d="M1405.4 385L1421.6000000000001 401.3H1389.2z" fill="#fffa6e" stroke="#cfcfcf" stroke-width="0.600"/>
<text x="1405.2" y="399.6" font-size="4.2" text-anchor="middle" fill="#000" letter-spacing="0">FC</text>
<path d="M1405.4 426.5L1421.6000000000001 442.8H1389.2z" fill="#fffa6e" stroke="#cfcfcf" stroke-width="0.600"/>
<text x="1405.2" y="441.1" font-size="4.2" text-anchor="middle" fill="#000" letter-spacing="0">tailings</text>
<path d="M1491.3 359.4L1507.5 375.7H1475.1z" fill="#fffa6e" stroke="#cfcfcf" stroke-width="0.600"/>
<text x="1491.1" y="374.0" font-size="4.2" text-anchor="middle" fill="#000" letter-spacing="0">TLO</text>
<path d="M1573 360.500V374.500A19.850 1.600 0 0 0 1612.700 374.500V360.500z" fill="#fc8cfc" stroke="#cfcfcf" stroke-width="0.500"/>
<ellipse cx="1592.850" cy="360.500" rx="19.850" ry="1.600" fill="#fda6fd" stroke="#d8a0d8" stroke-width="0.500"/>
<text x="1592.8" y="369" font-size="4.3" text-anchor="middle" fill="#000" letter-spacing="0">Product</text>
</svg>
</body>
</html>
